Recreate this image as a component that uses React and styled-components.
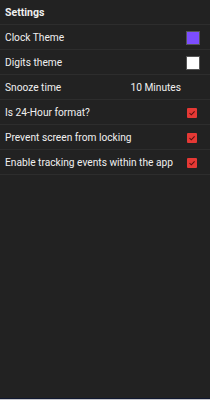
import React from 'react';
import styled, { createGlobalStyle } from 'styled-components';

const GlobalStyle = createGlobalStyle`
    html, body {
        margin: 0;
        padding: 0;
        background: #222222;
    }
    #root {
        height: 400px;
    }
`;

const rows = [
    { label: 'Clock Theme', kind: 'swatch', color: '#7c4dff' },
    { label: 'Digits theme', kind: 'swatch', color: '#ffffff' },
    { label: 'Snooze time', kind: 'value', value: '10 Minutes' },
    { label: 'Is 24-Hour format?', kind: 'check' },
    { label: 'Prevent screen from locking', kind: 'check' },
    { label: 'Enable tracking events within the app', kind: 'check' },
];

const App = () => {
    return (
        <>
            <GlobalStyle />
            <Screen>
                <Header>Settings</Header>
                {rows.map((row) => (
                    <Row key={row.label}>
                        <Label>{row.label}</Label>
                        {row.kind === 'swatch' && <Swatch $color={row.color} />}
                        {row.kind === 'value' && <Value>{row.value}</Value>}
                        {row.kind === 'check' && (
                            <Check>
                                <svg width="8" height="8" viewBox="0 0 8 8">
                                    <path d="M1.5 4.2 L3.3 5.8 L6.6 2.3" fill="none" stroke="#5a1010" strokeWidth="1.1" />
                                </svg>
                            </Check>
                        )}
                    </Row>
                ))}
                <Spacer />
                <BottomEdge />
            </Screen>
        </>
    );
};

export default App;

const Screen = styled.div`
    height: 400px;
    display: flex;
    flex-direction: column;
    background: #222222;
    font-family: Roboto, 'Liberation Sans', sans-serif;
    color: #f0f0f0;
`;

const Header = styled.div`
    height: 25px;
    display: flex;
    align-items: center;
    padding: 1px 5px 0 5px;
    box-sizing: border-box;
    font-size: 10.5px;
    font-weight: 700;
    border-bottom: 1px solid #2d2d2d;
`;

const Row = styled.div`
    height: 25px;
    display: flex;
    align-items: center;
    justify-content: space-between;
    padding: 1px 11px 0 5px;
    box-sizing: border-box;
    border-bottom: 1px solid #2d2d2d;
`;

const Label = styled.span`
    font-size: 10.2px;
`;

const Swatch = styled.span`
    width: 14px;
    height: 14px;
    margin-right: -1px;
    background: ${(p) => p.$color};
    border: 1px solid #555;
    box-sizing: border-box;
`;

const Value = styled.span`
    font-size: 10.2px;
    margin-right: 18px;
`;

const Check = styled.span`
    width: 10px;
    height: 10px;
    margin-right: 2px;
    background: #e53935;
    border-radius: 1px;
    display: flex;
    align-items: center;
    justify-content: center;
`;

const Spacer = styled.div`
    flex: 1;
`;

const BottomEdge = styled.div`
    height: 2px;
    border-top: 1px solid #101830;
    background: #c8c8cc;
    box-sizing: border-box;
`;
